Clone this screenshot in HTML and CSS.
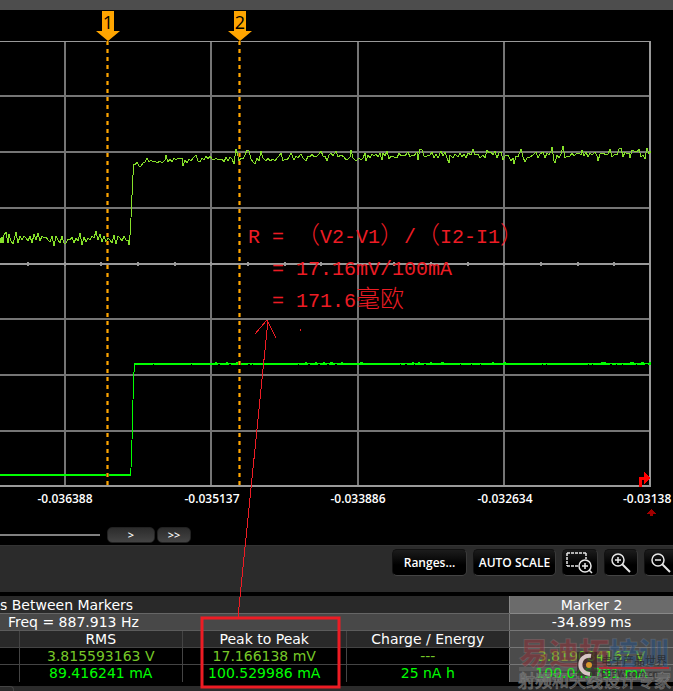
FILE: index.html
```html
<!DOCTYPE html>
<html lang="en">
<head>
  <meta charset="UTF-8">
  <meta name="viewport" content="width=device-width, initial-scale=1.0">
  <title>Data Logger - Markers</title>
  <link rel="stylesheet" href="styles.css">
</head>
<body>

<div class="screen">
  <div class="title-bar"></div>

  <!-- Plot -->
  <svg class="plot" viewBox="0 10 673 515">
    <path class="grid" d="M65 41V486M211 41V486M358 41V486M504 41V486M0 96H650M0 152H650M0 208H650M0 319H650M0 375H650M0 431H650"/>
    <path class="grid-light" d="M0 264H650M0 486H651M650 41V487"/>
    <path class="grid-top" d="M0 41.500H651"/>
    <path class="ticks" d="M28 262v4M65 262v4M101 262v4M138 262v4M175 262v4M211 262v4M248 262v4M285 262v4M321 262v4M358 262v4M394 262v4M431 262v4M468 262v4M504 262v4M541 262v4M578 262v4M614 262v4"/>

    <!-- voltage -->
    <polyline class="trace-v" points="0,238 1,243 2,237 3,243 4,235 6,232 8,243 9,234 11,241 13,244 15,236 16,232 18,243 20,236 22,240 24,236 26,238 28,241 30,236 32,243 34,234 36,240 38,233 40,241 42,236 44,238 46,237 48,240 50,242 52,236 54,246 56,236 58,240 60,243 62,236 64,243 66,243 68,239 70,240 72,237 74,243 76,238 78,241 80,233 82,245 84,237 86,242 88,238 90,240 92,236 94,238 96,231 98,240 100,234 102,242 104,236 106,242 108,238 110,240 112,243 114,235 116,244 118,236 120,238 122,241 124,236 126,240 128,240 129,245 130,235 131,218 132,195 133,175 134,164 135,165 137,162 139,166 141,166 143,163 145,162 147,158 149,162 151,160 153,162 155,161 157,163 160,161 162,163 165,160 166,155 168,162 170,159 172,162 174,158 176,160 178,158 180,159 182,158 183,166 185,160 187,163 189,159 191,161 193,158 196,155 198,161 200,162 202,158 204,160 206,156 208,159 210,156 212,159 214,160 216,158 218,160 220,159 222,159 224,162 226,157 228,161 230,157 232,159 234,164 236,149 238,156 239,161 241,158 243,159 245,155 247,150 249,151 251,159 253,162 255,164 257,158 259,161 261,151 263,158 266,161 268,158 270,161 273,159 275,161 277,158 279,156 281,153 283,161 285,159 287,160 289,157 291,153 294,160 296,156 298,158 301,154 303,158 306,161 308,156 310,157 312,154 314,157 317,156 319,154 321,151 323,156 325,156 327,161 329,155 331,153 333,156 336,151 338,157 341,155 344,157 346,160 348,159 350,157 351,150 353,158 356,161 359,158 361,160 363,158 365,153 366,161 368,155 370,158 372,154 374,156 376,154 378,157 380,153 382,160 383,153 385,156 387,151 389,159 391,156 394,157 397,158 399,153 401,156 403,155 405,156 408,152 410,157 412,155 414,156 417,152 418,160 420,149 422,150 424,156 427,156 430,155 432,152 434,158 436,154 438,158 441,151 443,156 445,152 447,158 449,163 450,155 453,158 455,154 458,157 460,153 462,157 464,154 466,158 468,153 471,155 473,149 475,155 478,154 480,158 483,155 485,158 487,150 489,153 491,152 493,155 495,151 497,158 499,153 501,152 503,160 505,156 508,155 511,161 513,158 514,164 516,156 518,157 521,149 523,157 525,162 527,158 530,157 533,155 536,152 538,158 540,154 543,152 545,158 547,153 549,155 551,151 552,147 554,161 555,163 557,155 559,158 561,154 563,146 565,158 567,156 570,156 572,153 574,156 576,154 579,153 581,155 582,150 584,156 586,152 588,157 590,153 592,155 595,152 597,156 598,161 600,154 603,153 606,155 608,154 610,149 612,157 615,154 617,155 619,149 621,148 623,157 625,152 627,154 629,153 630,158 632,150 634,151 637,152 639,149 641,157 643,155 645,159 647,148 649,154 651,151"/>

    <!-- current -->
    <path class="trace-i-step" d="M130 475L131 468L132 440L133 400L134 372V364"/>
    <path class="trace-i" d="M0 475H131M134 364H651"/>
    <path class="trace-i-noise" d="M215 362.500h2M226 362.500h2M236 362.500h2M305 362.500h2M315 362.500h2M323 362.500h2M330 362.500h3M341 362.500h2M360 362.500h3M412 362.500h2M418 362.500h2M430 362.500h2M441 362.500h3M492 362.500h2M504 362.500h2M601 362.500h5M630 362.500h4M641 362.500h3M649 362.500h2"/>
    <path class="trace-i-gap" d="M153 364.500h1M191 364.500h1M218 364.500h2M229 364.500h2M248 364.500h2M252 364.500h1M298 364.500h1M308 364.500h2M318 364.500h2M327 364.500h2M335 364.500h2M400 364.500h1M405 364.500h2M414 364.500h1M424 364.500h2M460 364.500h1M471 364.500h1M480 364.500h1M542 364.500h1M546 364.500h1M588 364.500h1M592 364.500h1M610 364.500h2M616 364.500h1M622 364.500h1M636 364.500h1M645 364.500h3"/>

    <!-- markers -->
    <path class="marker-edge" d="M107.500 41V486M239.500 41V486"/>
    <path class="marker-line" d="M107.500 41V486M239.500 41V486"/>
    <path class="marker-head" d="M102 11h12v20h6L108 41L96 31h6zM234 11h12v20h6L240 41L228 31h6z"/>
    <text class="marker-text" x="108" y="29">1</text>
    <text class="marker-text" x="240" y="29">2</text>

    <!-- trigger -->
    <path class="trigger-line" d="M640 487V478H645"/>
    <path class="trigger" d="M644 471L650 478L644 485z"/>
    <path class="trigger-time" d="M651 509L656 514H653V516H650V514H646z"/>

    <g class="axis">
      <text x="65" y="503">-0.036388</text>
      <text x="212" y="503">-0.035137</text>
      <text x="358" y="503">-0.033886</text>
      <text x="505" y="503">-0.032634</text>
      <text class="axis-last" x="623" y="503">-0.03138</text>
    </g>

    <g class="note">
      <text x="248" y="243">R = <tspan class="wide">（</tspan>V2-V1<tspan class="wide">）</tspan>/<tspan class="wide">（</tspan>I2-I1<tspan class="wide">）</tspan></text>
      <text x="272" y="275">= 17.16mV/100mA</text>
      <text x="272" y="307">= 171.6<tspan class="wide">毫欧</tspan></text>
    </g>
  </svg>

  <div class="scroll-row">
    <div class="scroll-track"></div>
    <button class="scroll-btn scroll-next" type="button">&gt;</button>
    <button class="scroll-btn" type="button">&gt;&gt;</button>
  </div>

  <div class="toolbar">
    <button class="btn btn-ranges" type="button">Ranges...</button>
    <button class="btn btn-scale" type="button">AUTO SCALE</button>
    <button class="btn btn-icon btn-area" type="button" aria-label="Zoom to area">
      <svg width="28" height="23" viewBox="0 0 28 23">
        <path d="M1 2H20M1 15H12M1 2V15M20 2V8" stroke-dasharray="3 1"/>
        <circle cx="19" cy="15" r="6"/>
        <path d="M16 15h6M19 12v6M23 19l3 3"/>
      </svg>
    </button>
    <button class="btn btn-icon" type="button" aria-label="Zoom in">
      <svg width="20" height="20" viewBox="0 0 20 20">
        <circle cx="7" cy="7" r="6"/>
        <path d="M4 7h6M7 4v6"/>
        <path class="handle" d="M11 11L19 19"/>
      </svg>
    </button>
    <button class="btn btn-icon" type="button" aria-label="Zoom out">
      <svg width="20" height="20" viewBox="0 0 20 20">
        <circle cx="7" cy="7" r="6"/>
        <path d="M4 7h6"/>
        <path class="handle" d="M11 11L19 19"/>
      </svg>
    </button>
  </div>

  <!-- Measurements -->
  <div class="measure">
    <table>
      <colgroup>
        <col class="col-first"><col><col><col><col>
      </colgroup>
      <tr class="row-title">
        <th colspan="4">s Between Markers</th>
        <th class="marker-title">Marker 2</th>
      </tr>
      <tr class="row-freq">
        <td colspan="4">Freq = 887.913 Hz</td>
        <td class="marker-cell">-34.899 ms</td>
      </tr>
      <tr class="row-names">
        <th></th>
        <th>RMS</th>
        <th>Peak to Peak</th>
        <th>Charge / Energy</th>
        <th class="marker-cell"></th>
      </tr>
      <tr class="row-v">
        <td></td>
        <td>3.815593163 V</td>
        <td>17.166138 mV</td>
        <td>---</td>
        <td class="marker-cell">3.819084167 V</td>
      </tr>
      <tr class="row-i">
        <td></td>
        <td>89.416241 mA</td>
        <td>100.529986 mA</td>
        <td>25 nA h</td>
        <td class="marker-cell">100.045791 mA</td>
      </tr>
    </table>

    <svg class="watermark" width="158" height="56" viewBox="0 0 158 56">
      <text class="wm-red" x="4" y="28">易迪拓</text>
      <text class="wm-blue" x="94" y="28">培训</text>
      <path class="wm-line" d="M4 32H156M4 34H156"/>
      <text class="wm-sub" x="3" y="51">射频和天线设计专家</text>
      <rect class="wm-box" x="62" y="16" width="20" height="24"/>
      <path class="wm-ring" d="M76 20C63 18 61 37 75 38"/>
      <circle class="wm-dot" cx="74" cy="29" r="3"/>
      <text class="wm-small" x="86" y="29">电子产品世界</text>
      <path class="wm-underline" d="M84 32H154"/>
      <text class="wm-url" x="86" y="41">EEPW.com.cn</text>
    </svg>
  </div>

  <div class="bottom-bar"><div class="bottom-tab"></div></div>

  <!-- Red callout from the table to the formula -->
  <svg class="callout" viewBox="0 0 673 691">
    <path d="M238 617L268 320M255 334L267 320L276 338M300 329v2"/>
    <rect x="202" y="618" width="137" height="69"/>
  </svg>
</div>

</body>
</html>
```
FILE: styles.css
```css
* {
  box-sizing: border-box;
}
body {
  margin: 0;
  background: #000;
  color: #fff;
  font-family: "Open Sans", "Noto Sans", sans-serif;
}
.screen {
  position: relative;
  overflow: hidden;
}
.title-bar {
  height: 10px;
  background: #4d4d4d;
}

/* plot */
.plot {
  display: block;
  width: 100%;
}
.plot path, .plot polyline {
  fill: none;
  shape-rendering: crispEdges;
}
.plot .grid {
  stroke: #757575;
  stroke-width: 2;
}
.plot .grid-light {
  stroke: #999;
  stroke-width: 2;
}
.plot .grid-top {
  stroke: #999;
}
.plot .ticks {
  stroke: #999;
  stroke-width: 2;
}
.plot .trace-v {
  stroke: #86e02a;
}
.plot .trace-i, .plot .trace-i-step {
  stroke: #0f0;
  stroke-width: 2;
}
.plot .trace-i-step {
  stroke-width: 1;
}
.plot .trace-i-noise {
  stroke: #0f0;
  stroke-width: 1;
}
.plot .trace-i-gap {
  stroke: #000;
  stroke-width: 1;
}
.plot .marker-edge {
  stroke: #9c6500;
  stroke-width: 3;
  stroke-dasharray: 4 4;
}
.plot .marker-line {
  stroke: #ffa500;
  stroke-dasharray: 4 4;
}
.plot .marker-head {
  fill: #ffa500;
  shape-rendering: auto;
}
.marker-text {
  fill: #000;
  font-size: 18px;
  text-anchor: middle;
}
.plot .trigger-line {
  stroke: #f00;
  stroke-width: 3;
}
.plot .trigger {
  fill: #f00;
}
.plot .trigger-time {
  fill: #a00000;
}
.axis text {
  fill: #fff;
  font-size: 12px;
  font-weight: 600;
  text-anchor: middle;
}
.axis .axis-last {
  text-anchor: start;
}
.note text {
  fill: #ed1c24;
  font-family: "Liberation Mono", "Noto Sans CJK SC", monospace;
  font-size: 20px;
  white-space: pre;
}
.note .wide {
  font-family: "Noto Sans CJK SC", sans-serif;
  font-size: 24px;
  font-weight: 300;
}

/* scroll bar */
.scroll-row {
  display: flex;
  align-items: center;
  height: 20px;
  gap: 2px;
}
.scroll-track {
  width: 100px;
  height: 2px;
  background: #808080;
}
.scroll-btn {
  height: 16px;
  width: 34px;
  padding: 0;
  border: 1px solid #222;
  border-radius: 5px;
  background: linear-gradient(#2c2c2c, #444);
  color: #fff;
  font: 600 11px/12px "Open Sans", sans-serif;
}
.scroll-next {
  width: 48px;
  margin-left: 5px;
}

/* toolbar */
.toolbar {
  display: flex;
  justify-content: flex-end;
  align-items: flex-start;
  gap: 6px;
  height: 47px;
  padding-top: 3px;
  margin-right: -5px;
  background: #2b2b2b;
  border-top: 1px solid #333;
}
.btn {
  flex: none;
  height: 27px;
  padding: 0;
  border: 1px solid #111;
  border-bottom-color: #444;
  border-right-color: #3a3a3a;
  border-radius: 5px;
  background: linear-gradient(#1c1c1c, #000 60%);
  color: #fff;
  font: 600 12px/16px "Open Sans", sans-serif;
}
.btn-ranges {
  width: 75px;
}
.btn-scale {
  width: 83px;
}
.btn-icon {
  display: flex;
  justify-content: center;
  align-items: center;
  width: 34px;
}
.btn-area {
  width: 36px;
}
.btn svg {
  fill: none;
  stroke: #e8e8e8;
  stroke-width: 1.5;
}
.btn .handle {
  stroke-width: 2;
}

/* measurements table */
.measure {
  position: relative;
  border-top: 4px solid #000;
}
table {
  width: 100%;
  table-layout: fixed;
  border-collapse: collapse;
  font-family: "DejaVu Sans", sans-serif;
  font-size: 14px;
  line-height: 16px;
}
.col-first {
  width: 19px;
}
th, td {
  height: 17px;
  padding: 0;
  font-weight: normal;
  text-align: center;
  white-space: nowrap;
  border-left: 1px solid #444;
  border-bottom: 1px solid #444;
}
tr > :first-child {
  border-left: 0;
}
.row-title th {
  padding-top: 1px;
  background: #292929;
  border-bottom-color: #666;
}
.row-title > :first-child, .row-freq > :first-child {
  text-align: left;
}
.row-freq td {
  background: #484848;
  border-bottom-color: #5c5c5c;
}
.row-freq > :first-child {
  padding-left: 8px;
}
.row-names th {
  background: #292929;
}
.row-v {
  color: #76c828;
}
.row-i {
  color: #0f0;
}
.row-i td {
  border-bottom: 0;
}
.row-title .marker-title {
  background: #6b6b6b;
  border-color: #888;
}
tr .marker-cell, .row-names .marker-cell {
  background: #4b4b4b;
  border-color: #777;
}

/* watermark over the last column */
.watermark {
  position: absolute;
  right: 0;
  top: 40px;
  font-family: "Noto Sans CJK SC", sans-serif;
}
.wm-red, .wm-blue {
  font-size: 30px;
  font-weight: 900;
  fill: #962f37;
  fill-opacity: 0.5;
  stroke: #999;
  stroke-opacity: 0.25;
}
.wm-blue {
  fill: #24548c;
}
.wm-line {
  stroke: #888;
  stroke-opacity: 0.6;
}
.wm-sub {
  font-size: 17px;
  fill: #222;
  fill-opacity: 0.8;
  stroke: #999;
  stroke-opacity: 0.6;
}
.wm-box {
  fill: #2c2020;
  fill-opacity: 0.6;
}
.wm-ring {
  fill: none;
  stroke: #d8c4c4;
  stroke-width: 4;
}
.wm-dot {
  fill: #d8962c;
}
.wm-small {
  font-size: 11px;
  fill: #222;
  fill-opacity: 0.7;
}
.wm-underline {
  stroke: #b03038;
  stroke-width: 2;
}
.wm-url {
  font-size: 9px;
  fill: #222;
  fill-opacity: 0.7;
}

.bottom-bar {
  height: 5px;
  margin-top: 4px;
  background: #2b2b2b;
}
.bottom-tab {
  width: 15px;
  height: 5px;
  margin-left: -1px;
  border: 1px solid #444;
  border-bottom: 0;
  border-top-right-radius: 4px;
}

/* callout */
.callout {
  position: absolute;
  left: 0;
  top: 0;
  width: 100%;
  pointer-events: none;
  fill: none;
  stroke: #ed1c24;
}
.callout path {
  shape-rendering: crispEdges;
}
.callout rect {
  stroke-width: 3;
}
```
